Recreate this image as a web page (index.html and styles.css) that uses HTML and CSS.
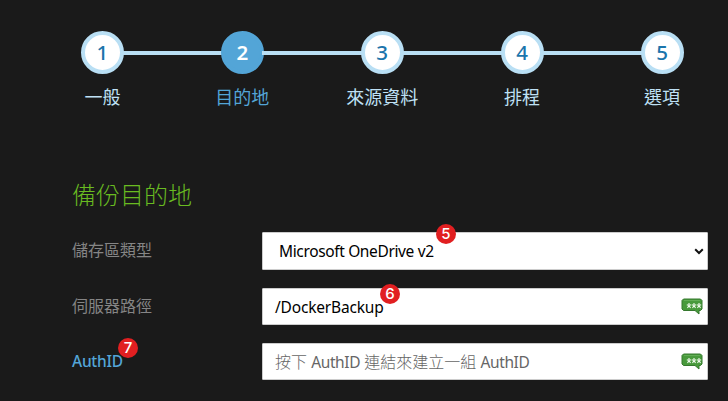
FILE: index.html
```
<!DOCTYPE html>
<html lang="zh-Hant">
<head>
<meta charset="utf-8">
<title>備份目的地</title>
<link rel="stylesheet" href="styles.css">
</head>
<body>
<ol class="steps">
  <li class="step"><span class="dot">1</span><span class="name">一般</span></li>
  <li class="step current"><span class="dot">2</span><span class="name">目的地</span></li>
  <li class="step"><span class="dot">3</span><span class="name">來源資料</span></li>
  <li class="step"><span class="dot">4</span><span class="name">排程</span></li>
  <li class="step"><span class="dot">5</span><span class="name">選項</span></li>
</ol>
<main class="form">
  <h2 class="title">備份目的地</h2>
  <div class="row row-select">
    <span class="label">儲存區類型</span>
    <div class="field select">
      <span class="value v-select">Microsoft OneDrive v2</span>
      <svg class="chevron" width="10" height="7" viewBox="0 0 10 7"><path d="M1.2 1.3 5 5 8.8 1.3" fill="none" stroke="#111" stroke-width="2"/></svg>
      <span class="badge b5">5</span>
    </div>
  </div>
  <div class="row">
    <span class="label">伺服器路徑</span>
    <div class="field">
      <span class="value v-path">/DockerBackup</span>
      <svg class="bubble" width="22" height="17" viewBox="0 0 22 17"><path d="M2.500 1h17L21 2.500v8.500l-1.500 1.500H18V16l-4-3.500H2.500L1 11V2.500z" fill="#489a3c" stroke="#35782d"/><path d="M3 2.500h16" stroke="#62ad55"/><path d="M8 5v2.500M5.800 6.700 8 7.500l2.200-.8M6.500 10 8 7.500 9.500 10M13 5v2.500M10.800 6.700l2.200.8 2.200-.8M11.500 10 13 7.500l1.500 2.500M18 5v2.500M15.800 6.700l2.200.8 2.200-.8M16.500 10 18 7.500l1.500 2.500" fill="none" stroke="#f4fcf0" stroke-width="1.100"/></svg>
      <span class="badge b6">6</span>
    </div>
  </div>
  <div class="row">
    <span class="label"><a class="link">AuthID</a><span class="badge b7">7</span></span>
    <div class="field">
      <span class="value v-hint">按下 <span class="latin">AuthID</span> 連結來建立一組 <span class="latin">AuthID</span></span>
      <svg class="bubble" width="22" height="17" viewBox="0 0 22 17"><path d="M2.500 1h17L21 2.500v8.500l-1.500 1.500H18V16l-4-3.500H2.500L1 11V2.500z" fill="#489a3c" stroke="#35782d"/><path d="M3 2.500h16" stroke="#62ad55"/><path d="M8 5v2.500M5.800 6.700 8 7.500l2.200-.8M6.500 10 8 7.500 9.500 10M13 5v2.500M10.800 6.700l2.200.8 2.200-.8M11.500 10 13 7.500l1.500 2.500M18 5v2.500M15.800 6.700l2.200.8 2.200-.8M16.500 10 18 7.500l1.500 2.500" fill="none" stroke="#f4fcf0" stroke-width="1.100"/></svg>
    </div>
  </div>
</main>
</body>
</html>
```
FILE: styles.css
```
* { box-sizing: border-box; }
body {
  margin: 0;
  height: 401px;
  overflow: hidden;
  background: #1a1a1a;
  font-family: "Noto Sans", "Noto Sans CJK TC", sans-serif;
  color: #000;
}
.steps {
  display: flex;
  list-style: none;
  margin: 0;
  padding: 31px 0 0 32.500px;
  height: 177px;
}
.step {
  position: relative;
  flex: 0 0 139.900px;
  display: flex;
  flex-direction: column;
  align-items: center;
  color: #bfe1f5;
}
.step:not(:last-child)::after {
  content: "";
  position: absolute;
  left: 90px;
  top: 20px;
  width: 100px;
  height: 4px;
  background: #b9dff4;
}
.dot {
  width: 43px;
  height: 43px;
  border: 4px solid #b9dff4;
  border-radius: 50%;
  background: #fff;
  color: #1b75ac;
  font: 500 20.500px/35px "Noto Sans", sans-serif;
  text-align: center;
}
.name { margin-top: 10px; font-size: 18px; line-height: 27px; font-weight: 400; }
.current { color: #53a5d7; }
.current .dot { background: #53a5d7; border-color: #53a5d7; color: #fff; font-weight: 600; }
.form { padding-left: 72px; width: 708px; }
.title {
  margin: 0 0 20px;
  font-size: 24px;
  line-height: 35px;
  font-weight: 300;
  color: #69bb21;
}
.row {
  display: grid;
  grid-template-columns: 190px 446px;
  align-items: center;
  height: 37px;
  margin-bottom: 18px;
}
.row-select { height: 38px; }
.label { position: relative; top: -1px; font-size: 16px; line-height: 24px; color: #858585; }
.link { color: #53a5d7; font-size: 15.500px; font-weight: 500; letter-spacing: -.25px; }
.field {
  position: relative;
  display: flex;
  align-items: center;
  justify-content: space-between;
  height: 100%;
  padding: 0 4px 0 12px;
  border: 1px solid #ccc;
  border-radius: 1px;
  background: #fff;
}
.select { padding-left: 16px; padding-right: 3px; }
.value { font-size: 15.500px; line-height: 24px; white-space: nowrap; }
.v-select { letter-spacing: -.36px; }
.v-path { letter-spacing: -.18px; }
.v-hint { font-size: 16px; font-weight: 300; color: #666; }
.latin { font-size: 15.500px; font-weight: 400; letter-spacing: -.38px; }
.badge {
  position: absolute;
  width: 20px;
  height: 20px;
  border-radius: 50%;
  background: #e11f21;
  color: #fff;
  font: 500 15px/20px Inter, sans-serif;
  text-align: center;
}
.b5 { left: 173px; top: -9px; }
.b6 { left: 117px; top: -5px; }
.b7 { left: 46px; top: -11px; }
```
